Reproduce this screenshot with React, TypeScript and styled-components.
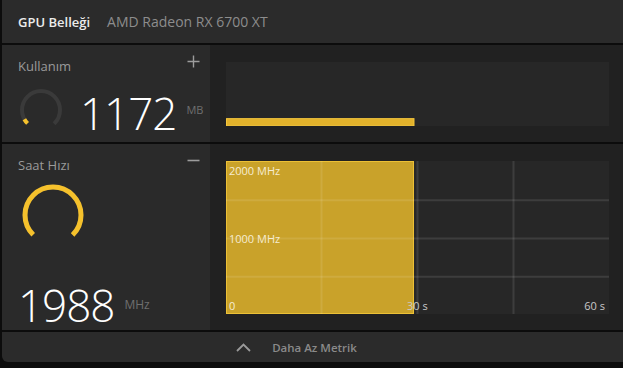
import styled, { createGlobalStyle } from "styled-components";

const GlobalStyle = createGlobalStyle`
  html, body {
    margin: 0;
    padding: 0;
    background: #0c0c0c;
  }
  body {
    width: 623px;
    height: 368px;
    overflow: hidden;
    font-family: "Open Sans", "Noto Sans", sans-serif;
  }
`;

const YELLOW = "#f5c12c";

interface GaugeProps {
  size: number;
  radius: number;
  stroke: number;
  value: number;
}

function Gauge({ size, radius, stroke, value }: GaugeProps) {
  const c = size / 2;
  const circ = 2 * Math.PI * radius;
  const track = circ * 0.75;
  return (
    <GaugeSvg width={size} height={size} viewBox={`0 0 ${size} ${size}`}>
      <circle
        cx={c}
        cy={c}
        r={radius}
        fill="none"
        stroke="#3a3a3a"
        strokeWidth={stroke}
        strokeDasharray={`${track} ${circ}`}
        transform={`rotate(135 ${c} ${c})`}
      />
      <circle
        cx={c}
        cy={c}
        r={radius}
        fill="none"
        stroke={YELLOW}
        strokeWidth={stroke}
        strokeDasharray={`${track * value} ${circ}`}
        transform={`rotate(135 ${c} ${c})`}
      />
    </GaugeSvg>
  );
}

function PlusIcon() {
  return (
    <ToggleIcon width="13" height="13" viewBox="0 0 13 13">
      <path d="M6.5 0.5v12M0.5 6.5h12" stroke="#9c9c9c" strokeWidth="1.4" />
    </ToggleIcon>
  );
}

function MinusIcon() {
  return (
    <ToggleIcon width="13" height="13" viewBox="0 0 13 13">
      <path d="M0.5 6.5h12" stroke="#9c9c9c" strokeWidth="1.6" />
    </ToggleIcon>
  );
}

function ChevronUp() {
  return (
    <svg width="15" height="9" viewBox="0 0 15 9">
      <path d="M1 8l6.5-6.5L14 8" fill="none" stroke="#9a9a9a" strokeWidth="1.8" />
    </svg>
  );
}

function UsageBars() {
  return (
    <ChartSvg viewBox="0 0 382 64" preserveAspectRatio="none">
      <rect x="0.5" y="56.5" width="187" height="7" fill="#e2b22b" stroke="#f4c63c" />
    </ChartSvg>
  );
}

function ClockChart() {
  const cols = [95.5, 191.5, 287.5];
  const rows = [39, 77, 115];
  return (
    <ChartSvg viewBox="0 0 383 152" preserveAspectRatio="none">
      <rect x="0.5" y="0.5" width="187" height="151" fill="#c9a22a" stroke="#ecc036" />
      {cols.map((x) => (
        <line key={x} x1={x} y1="0" x2={x} y2="152" stroke="rgba(255,255,255,0.1)" strokeWidth="2" />
      ))}
      {rows.map((y) => (
        <line key={y} x1="0" y1={y} x2="383" y2={y} stroke="rgba(255,255,255,0.1)" strokeWidth="2" />
      ))}
    </ChartSvg>
  );
}

export default function App() {
  return (
    <>
      <GlobalStyle />
      <Window>
        <Header>
          <Title>GPU Belleği</Title>
          <Device>AMD Radeon RX 6700 XT</Device>
        </Header>

        <MetricRow $height={97}>
          <SidePanel>
            <PanelHead>
              <Label>Kullanım</Label>
              <PlusIcon />
            </PanelHead>
            <ValueRow>
              <Gauge size={46} radius={19} stroke={4} value={0.06} />
              <Reading>
                <BigNumber>1172</BigNumber>
                <Unit $size={11} $lift={16}>MB</Unit>
              </Reading>
            </ValueRow>
          </SidePanel>
          <ChartArea>
            <ChartBox>
              <UsageBars />
            </ChartBox>
          </ChartArea>
        </MetricRow>

        <MetricRow $height={186}>
          <SidePanel>
            <PanelHead>
              <Label>Saat Hızı</Label>
              <MinusIcon />
            </PanelHead>
            <BigGaugeWrap>
              <Gauge size={70} radius={28} stroke={5} value={1} />
            </BigGaugeWrap>
            <Reading $push>
              <BigNumber>1988</BigNumber>
              <Unit $size={12} $lift={12}>MHz</Unit>
            </Reading>
          </SidePanel>
          <ChartArea>
            <ChartBox>
              <ClockChart />
              <AxisLabel $top={3} $left={3} $light>2000 MHz</AxisLabel>
              <AxisLabel $top={71} $left={3} $light>1000 MHz</AxisLabel>
              <AxisLabel $bottom={1} $left={3} $light>0</AxisLabel>
              <AxisLabel $bottom={1} $left={181}>30 s</AxisLabel>
              <AxisLabel $bottom={1} $right={4}>60 s</AxisLabel>
            </ChartBox>
          </ChartArea>
        </MetricRow>

        <Footer>
          <ChevronUp />
          <FooterText>Daha Az Metrik</FooterText>
        </Footer>
      </Window>
    </>
  );
}

const Window = styled.div`
  margin-left: 2px;
  width: 621px;
  height: 362px;
  display: flex;
  flex-direction: column;
  gap: 2px;
  background: #0c0c0c;
  border-bottom-left-radius: 6px;
  overflow: hidden;
`;

const Header = styled.div`
  height: 43px;
  flex: none;
  display: flex;
  align-items: center;
  gap: 17px;
  padding-left: 16px;
  background: #2b2b2b;
`;

const Title = styled.span`
  font-size: 13px;
  font-weight: 600;
  color: #ececec;
`;

const Device = styled.span`
  font-size: 14px;
  color: #8d8d8d;
`;

const MetricRow = styled.div<{ $height: number }>`
  height: ${(p) => p.$height}px;
  flex: none;
  display: grid;
  grid-template-columns: 208px 1fr;
`;

const SidePanel = styled.div`
  display: flex;
  flex-direction: column;
  padding: 12px 10px 3px 16px;
  background: #2a2a2a;
`;

const PanelHead = styled.div`
  display: flex;
  justify-content: space-between;
  align-items: flex-start;
`;

const Label = styled.span`
  font-size: 13px;
  line-height: 18px;
  color: #9a9a9a;
`;

const ToggleIcon = styled.svg`
  flex: none;
  margin-top: -2px;
`;

const GaugeSvg = styled.svg`
  display: block;
  flex: none;
`;

const ValueRow = styled.div`
  display: flex;
  align-items: center;
  gap: 16px;
  margin-top: 10px;
`;

const BigGaugeWrap = styled.div`
  margin-top: 6px;
`;

const Reading = styled.div<{ $push?: boolean }>`
  display: flex;
  align-items: flex-end;
  gap: 10px;
  margin-top: ${(p) => (p.$push ? "auto" : "6px")};
`;

const BigNumber = styled.span`
  font-size: 44px;
  line-height: 44px;
  font-weight: 300;
  color: #ffffff;
  letter-spacing: -1px;
`;

const Unit = styled.span<{ $size: number; $lift: number }>`
  font-size: ${(p) => p.$size}px;
  line-height: ${(p) => p.$size}px;
  color: #6f6f6f;
  margin-bottom: ${(p) => p.$lift + 4}px;
`;

const ChartArea = styled.div`
  display: flex;
  padding: 17px 14px 16px 16px;
  background: #212121;
`;

const ChartBox = styled.div`
  position: relative;
  flex: 1;
  background: #272727;
`;

const ChartSvg = styled.svg`
  display: block;
  width: 100%;
  height: 100%;
`;

const AxisLabel = styled.span<{
  $top?: number;
  $left?: number;
  $right?: number;
  $bottom?: number;
  $light?: boolean;
}>`
  position: absolute;
  ${(p) => (p.$top !== undefined ? `top: ${p.$top}px;` : "")}
  ${(p) => (p.$left !== undefined ? `left: ${p.$left}px;` : "")}
  ${(p) => (p.$right !== undefined ? `right: ${p.$right}px;` : "")}
  ${(p) => (p.$bottom !== undefined ? `bottom: ${p.$bottom}px;` : "")}
  font-size: 11px;
  line-height: 14px;
  color: ${(p) => (p.$light ? "#f6ecd2" : "#c9c9c9")};
`;

const Footer = styled.div`
  height: 30px;
  flex: none;
  display: flex;
  align-items: center;
  justify-content: center;
  gap: 21px;
  padding-right: 32px;
  background: #2b2b2b;
`;

const FooterText = styled.span`
  font-size: 11.5px;
  font-weight: 600;
  color: #8a8a8a;
`;
